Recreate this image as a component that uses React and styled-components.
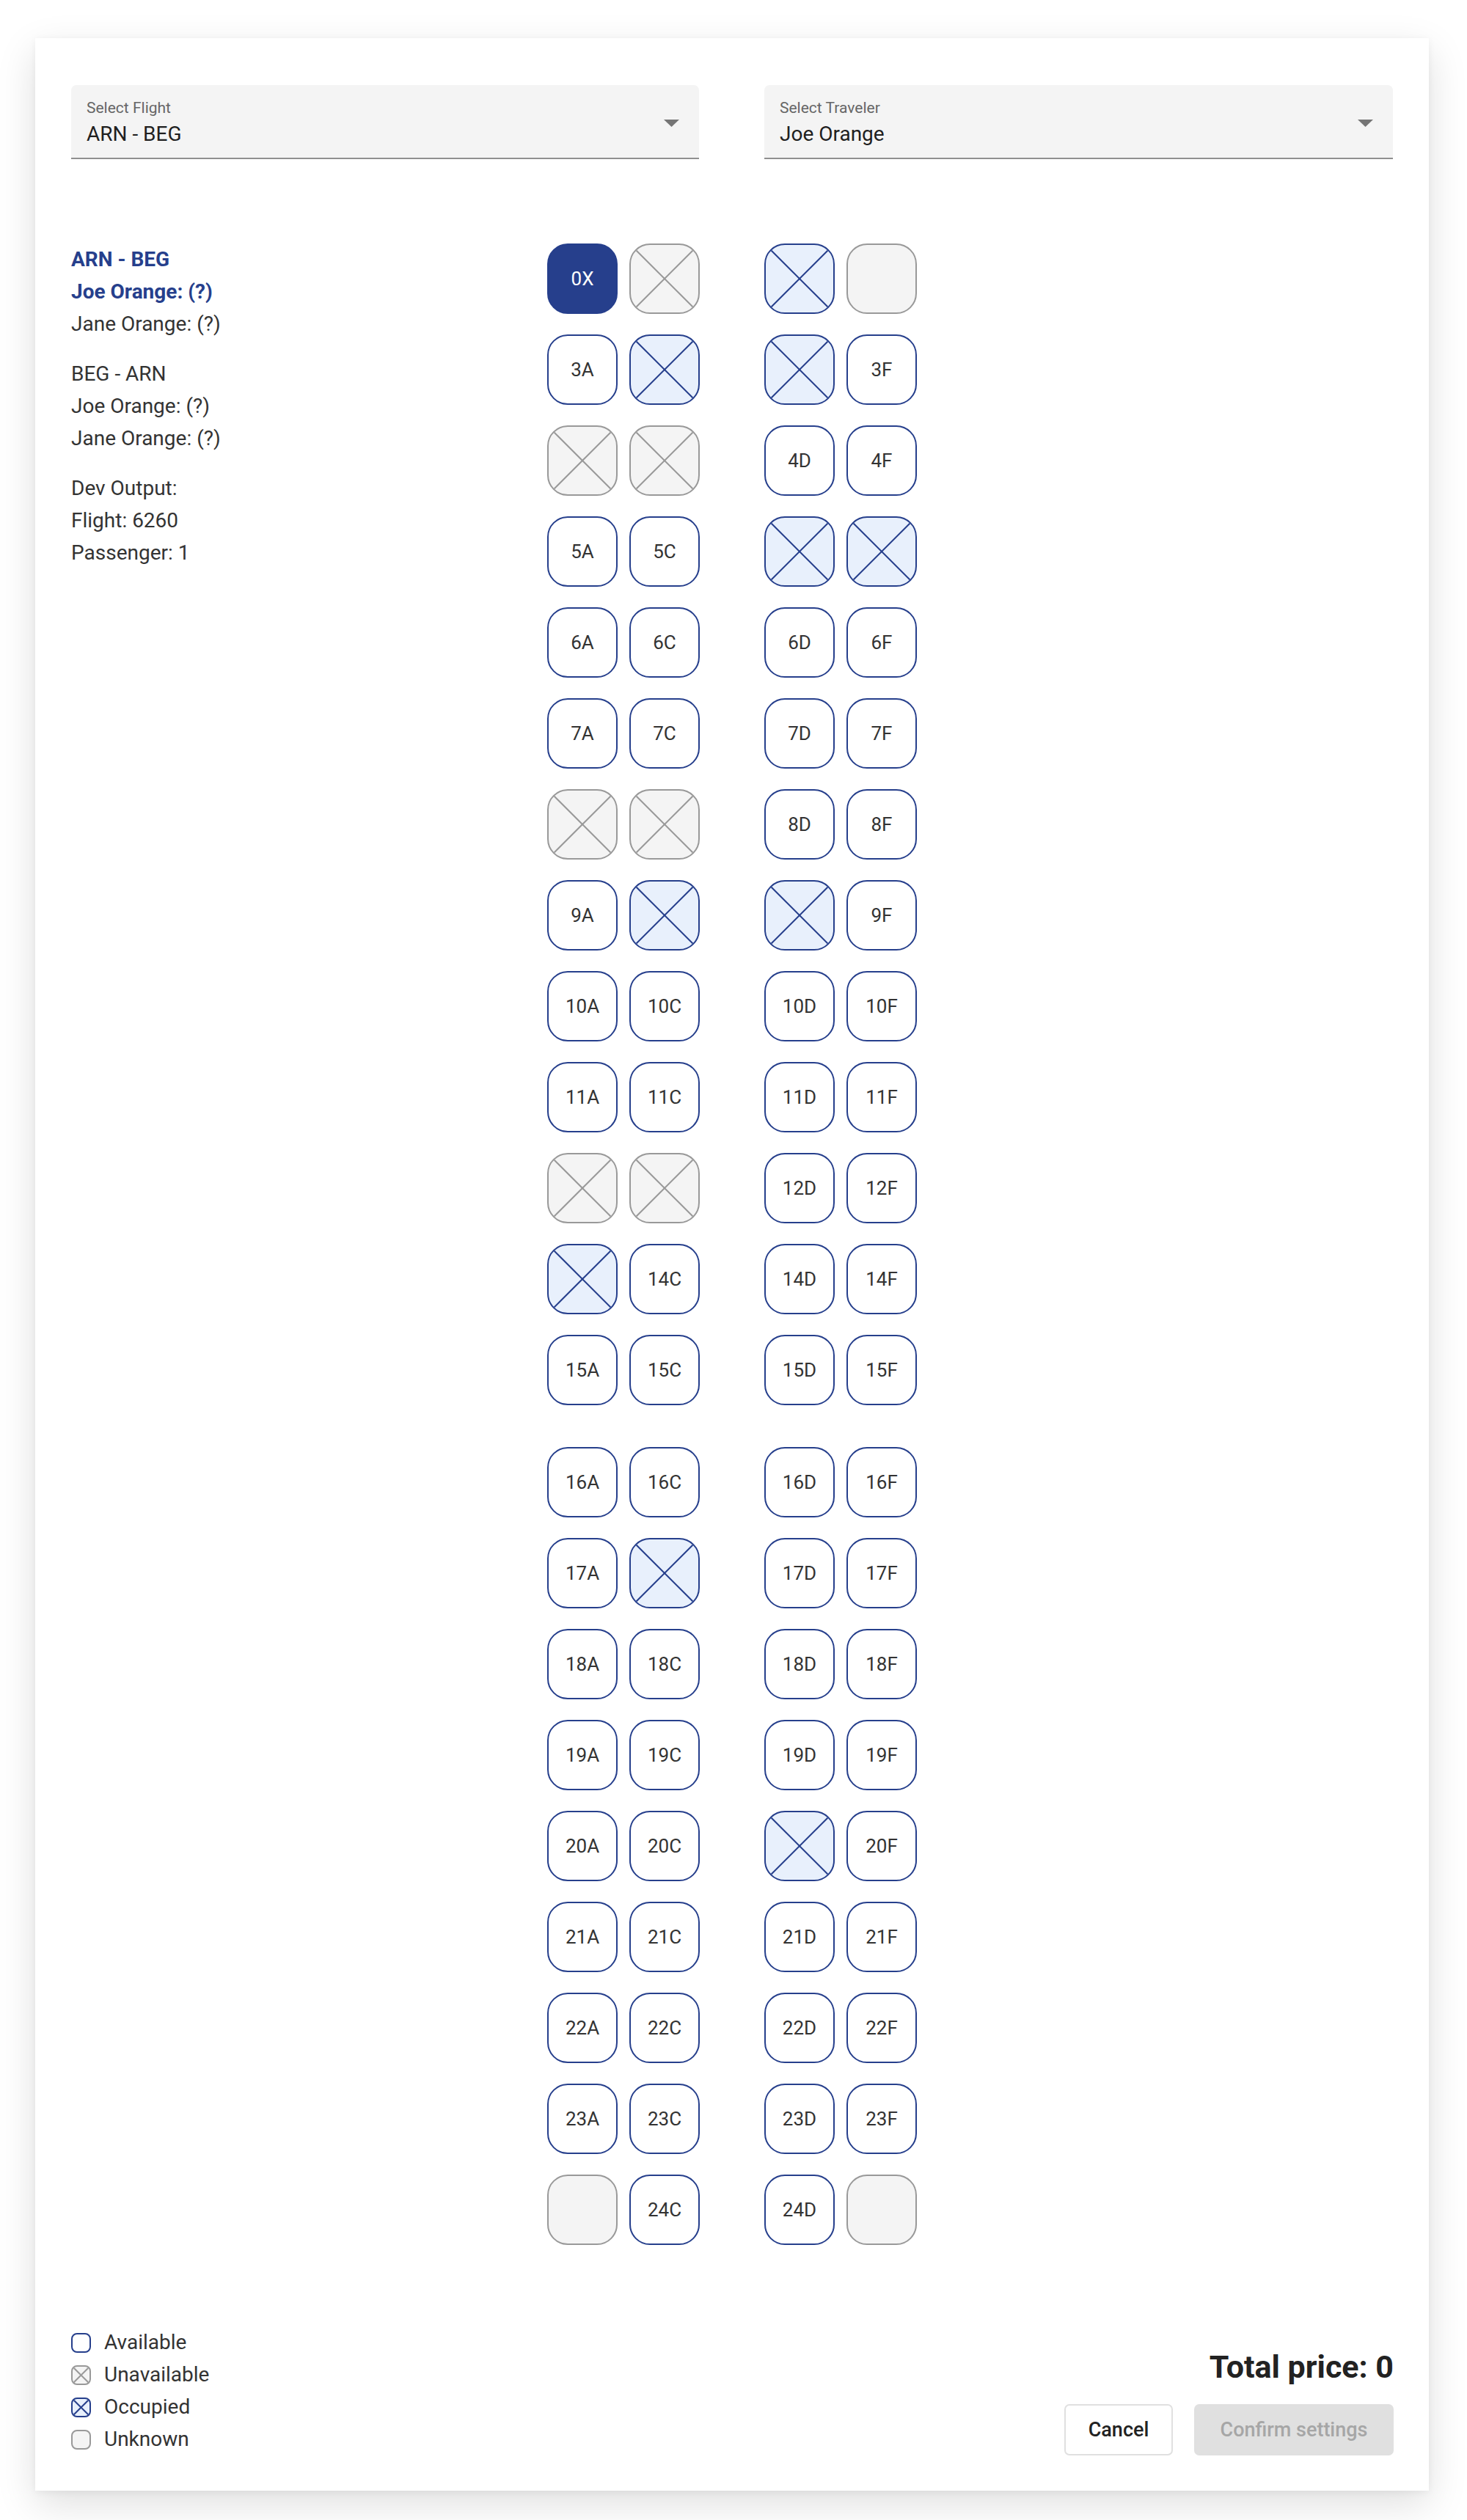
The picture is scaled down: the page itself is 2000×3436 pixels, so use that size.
import styled, { createGlobalStyle } from 'styled-components';

const GlobalStyle = createGlobalStyle`
  html, body {
    margin: 0;
    padding: 0;
    background: #ffffff;
    font-family: Roboto, "Liberation Sans", Arial, sans-serif;
  }
`

const BLUE = '#263f8c';
const TEXT = '#333333';

const Page = styled.div`
  width: 2000px;
  height: 3436px;
  box-sizing: border-box;
  padding: 52px 52px 40px 48px;
  background: #ffffff;
`

const Card = styled.div`
  width: 1900px;
  height: 3344px;
  box-sizing: border-box;
  padding: 64px 48px 48px 49px;
  background: #ffffff;
  box-shadow: 0 18px 50px rgba(0, 0, 0, 0.13), 0 2px 10px rgba(0, 0, 0, 0.05);
  display: flex;
  flex-direction: column;
`

const SelectRow = styled.div`
  display: grid;
  grid-template-columns: 856px 857px;
  column-gap: 89px;
`

const SelectField = styled.div`
  height: 101px;
  box-sizing: border-box;
  padding: 21px 27px 0 21px;
  background: #f4f4f4;
  border-radius: 7px 7px 0 0;
  border-bottom: 2px solid #8f8f8f;
  display: flex;
  align-items: flex-start;
  justify-content: space-between;
`

const SelectText = styled.div`
  display: flex;
  flex-direction: column;
`

const SelectLabel = styled.div`
  font-size: 21px;
  line-height: 1;
  color: #666666;
  margin-bottom: 4px;
`

const SelectValue = styled.div`
  font-size: 28px;
  line-height: 41px;
  color: #1f1f1f;
`

const Arrow = styled.svg`
  margin-top: 26px;
  width: 21px;
  height: 10px;
  fill: #757575;
`

const Main = styled.div`
  display: flex;
  margin-top: 115px;
`

const Info = styled.div`
  width: 649px;
  flex-shrink: 0;
  display: flex;
  flex-direction: column;
  gap: 24px;
`

const InfoGroup = styled.div`
  display: flex;
  flex-direction: column;
`

const InfoLine = styled.div`
  font-size: 28px;
  line-height: 44px;
  color: ${p => (p.$active ? BLUE : TEXT)};
  font-weight: ${p => (p.$active ? 700 : 400)};
`

const SeatMap = styled.div`
  display: flex;
  flex-direction: column;
  gap: 28px;
`

const SeatRow = styled.div`
  display: flex;
  gap: 88px;
  margin-bottom: ${p => (p.$exit ? '29px' : '0')};
`

const SeatBlock = styled.div`
  display: flex;
  gap: 16px;
`

const seatColors = {
  available: { bg: '#ffffff', border: BLUE, color: TEXT },
  selected: { bg: BLUE, border: BLUE, color: '#ffffff' },
  occupied: { bg: '#e8f0fc', border: BLUE, color: BLUE },
  unavailable: { bg: '#f4f4f4', border: '#999999', color: '#999999' },
  unknown: { bg: '#f4f4f4', border: '#999999', color: '#999999' },
};

const Seat = styled.div`
  width: 96px;
  height: 96px;
  box-sizing: border-box;
  border-radius: 28px;
  border: 2px solid ${p => seatColors[p.$status].border};
  background: ${p => seatColors[p.$status].bg};
  color: ${p => seatColors[p.$status].color};
  overflow: hidden;
  display: flex;
  align-items: center;
  justify-content: center;
  font-size: 26px;
  cursor: ${p => (p.$status === 'available' ? 'pointer' : 'default')};
`

const Cross = styled.svg`
  width: 100%;
  height: 100%;
  display: block;
  stroke: ${p => p.$color};
  stroke-width: 2;
`

const Footer = styled.div`
  margin-top: auto;
  display: flex;
  justify-content: space-between;
  align-items: flex-end;
`

const Legend = styled.div`
  display: flex;
  flex-direction: column;
`

const LegendItem = styled.div`
  display: flex;
  align-items: center;
  gap: 18px;
  font-size: 28px;
  line-height: 44px;
  color: ${TEXT};
`

const LegendMark = styled.div`
  width: 27px;
  height: 27px;
  box-sizing: border-box;
  border-radius: 8px;
  border: 2px solid ${p => seatColors[p.$status].border};
  background: ${p => seatColors[p.$status].bg};
  overflow: hidden;
`

const Summary = styled.div`
  display: flex;
  flex-direction: column;
  align-items: flex-end;
  gap: 22px;
`

const TotalPrice = styled.div`
  font-size: 43px;
  line-height: 58px;
  font-weight: 700;
  color: #222222;
`

const Buttons = styled.div`
  display: flex;
  gap: 29px;
`

const Button = styled.button`
  height: 70px;
  box-sizing: border-box;
  padding: 0 30px;
  border-radius: 7px;
  font-family: inherit;
  font-size: 27px;
  font-weight: 500;
  border: ${p => (p.$disabled ? 'none' : '2px solid #e0e0e0')};
  background: ${p => (p.$disabled ? '#e0e0e0' : '#ffffff')};
  color: ${p => (p.$disabled ? '#a6a6a6' : '#222222')};
  width: ${p => p.$width}px;
  cursor: ${p => (p.$disabled ? 'default' : 'pointer')};
`

const codes = { a: 'available', s: 'selected', o: 'occupied', x: 'unavailable', u: 'unknown' };
const letters = ['A', 'C', 'D', 'F'];

const rows = [
  ['0', 'sxou'],
  ['3', 'aooa'],
  ['4', 'xxaa'],
  ['5', 'aaoo'],
  ['6', 'aaaa'],
  ['7', 'aaaa'],
  ['8', 'xxaa'],
  ['9', 'aooa'],
  ['10', 'aaaa'],
  ['11', 'aaaa'],
  ['12', 'xxaa'],
  ['14', 'oaaa'],
  ['15', 'aaaa', true],
  ['16', 'aaaa'],
  ['17', 'aoaa'],
  ['18', 'aaaa'],
  ['19', 'aaaa'],
  ['20', 'aaoa'],
  ['21', 'aaaa'],
  ['22', 'aaaa'],
  ['23', 'aaaa'],
  ['24', 'uaau'],
];

const CrossLines = ({ color }) => (
  <Cross $color={color} viewBox="0 0 100 100" preserveAspectRatio="none">
    <line x1="0" y1="0" x2="100" y2="100" vectorEffect="non-scaling-stroke" />
    <line x1="100" y1="0" x2="0" y2="100" vectorEffect="non-scaling-stroke" />
  </Cross>
);

const SeatCell = ({ row, index, code }) => {
  const status = codes[code];
  let content = null;
  if (status === 'available') content = row + letters[index];
  if (status === 'selected') content = '0X';
  if (status === 'occupied' || status === 'unavailable') {
    content = <CrossLines color={seatColors[status].border} />;
  }
  return <Seat $status={status}>{content}</Seat>;
};

const legend = [
  ['available', 'Available'],
  ['unavailable', 'Unavailable'],
  ['occupied', 'Occupied'],
  ['unknown', 'Unknown'],
];

const App = () => {
  return (
    <Page>
      <GlobalStyle />
      <Card>
        <SelectRow>
          <SelectField>
            <SelectText>
              <SelectLabel>Select Flight</SelectLabel>
              <SelectValue>ARN - BEG</SelectValue>
            </SelectText>
            <Arrow viewBox="0 0 21 10"><polygon points="0,0 21,0 10.5,10" /></Arrow>
          </SelectField>
          <SelectField>
            <SelectText>
              <SelectLabel>Select Traveler</SelectLabel>
              <SelectValue>Joe Orange</SelectValue>
            </SelectText>
            <Arrow viewBox="0 0 21 10"><polygon points="0,0 21,0 10.5,10" /></Arrow>
          </SelectField>
        </SelectRow>

        <Main>
          <Info>
            <InfoGroup>
              <InfoLine $active>ARN - BEG</InfoLine>
              <InfoLine $active>Joe Orange: (?)</InfoLine>
              <InfoLine>Jane Orange: (?)</InfoLine>
            </InfoGroup>
            <InfoGroup>
              <InfoLine>BEG - ARN</InfoLine>
              <InfoLine>Joe Orange: (?)</InfoLine>
              <InfoLine>Jane Orange: (?)</InfoLine>
            </InfoGroup>
            <InfoGroup>
              <InfoLine>Dev Output:</InfoLine>
              <InfoLine>Flight: 6260</InfoLine>
              <InfoLine>Passenger: 1</InfoLine>
            </InfoGroup>
          </Info>

          <SeatMap>
            {rows.map(([row, pattern, exit]) => (
              <SeatRow key={row} $exit={exit}>
                <SeatBlock>
                  <SeatCell row={row} index={0} code={pattern[0]} />
                  <SeatCell row={row} index={1} code={pattern[1]} />
                </SeatBlock>
                <SeatBlock>
                  <SeatCell row={row} index={2} code={pattern[2]} />
                  <SeatCell row={row} index={3} code={pattern[3]} />
                </SeatBlock>
              </SeatRow>
            ))}
          </SeatMap>
        </Main>

        <Footer>
          <Legend>
            {legend.map(([status, label]) => (
              <LegendItem key={status}>
                <LegendMark $status={status}>
                  {(status === 'occupied' || status === 'unavailable') && (
                    <CrossLines color={seatColors[status].border} />
                  )}
                </LegendMark>
                {label}
              </LegendItem>
            ))}
          </Legend>
          <Summary>
            <TotalPrice>Total price: 0</TotalPrice>
            <Buttons>
              <Button $width={148}>Cancel</Button>
              <Button $width={272} $disabled disabled>Confirm settings</Button>
            </Buttons>
          </Summary>
        </Footer>
      </Card>
    </Page>
  );
};

export default App;
